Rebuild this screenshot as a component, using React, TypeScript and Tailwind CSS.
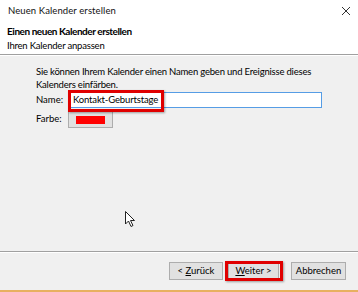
import React from "react";

export default function App() {
  return (
    <div
      className="relative w-[358px] h-[292px] overflow-hidden bg-[#f0f0f0] text-[9.5px] text-black"
      style={{ fontFamily: 'Lato, "Noto Sans", sans-serif' }}
    >
      {/* Title bar */}
      <div className="h-[21px] bg-white flex items-center justify-between pl-[8px] pr-[6px]">
        <span className="leading-none text-[#111] tracking-[0.1px]">Neuen Kalender erstellen</span>
        <svg width="10" height="10" viewBox="0 0 10 10" className="mr-[1px]">
          <path d="M1 1 L9 9 M9 1 L1 9" stroke="#333" strokeWidth="1" />
        </svg>
      </div>
      {/* Header */}
      <div className="h-[34px] bg-white pl-[7px] pt-[4px] flex flex-col gap-[1px] border-b border-[#a0a0a0]">
        <span className="font-bold leading-[13px] text-[10px] tracking-[-0.45px]">Einen neuen Kalender erstellen</span>
        <span className="leading-[13px] tracking-[-0.2px]">Ihren Kalender anpassen</span>
      </div>
      <div className="h-[1px] bg-white" />
      {/* Body */}
      <div className="h-[195px] pl-[36px] pt-[9px] flex flex-col">
        <p className="leading-[13px] whitespace-nowrap tracking-[-0.2px]">
          Sie können Ihrem Kalender einen Namen geben und Ereignisse dieses
          <br />
          Kalenders einfärben.
        </p>
        <div className="flex items-center mt-[1px] h-[16px]">
          <span className="w-[32px]">Name:</span>
          <div className="relative w-[254px] h-[16px] bg-white border border-[#569de5] flex items-center pl-[4px]">
            <span className="leading-none whitespace-nowrap tracking-[-0.15px]">Kontakt-Geburtstage</span>
            <div className="absolute left-[-1px] top-[-3px] w-[96px] h-[22px] border-[3px] border-[#e00000] shadow-[1px_1px_2px_rgba(0,0,0,0.35)]" />
          </div>
        </div>
        <div className="flex items-center mt-[3px] h-[17px]">
          <span className="w-[32px]">Farbe:</span>
          <div className="w-[45px] h-[17px] bg-[#e1e1e1] border border-[#adadad] flex items-center justify-center">
            <div className="w-[29px] h-[8px] bg-[#ff0000]" />
          </div>
        </div>
      </div>
      {/* Bottom separator */}
      <div className="h-[1px] bg-[#a0a0a0]" />
      <div className="h-[1px] bg-white" />
      {/* Buttons */}
      <div className="h-[36px] flex items-start justify-end pt-[9px] pr-[12px]">
        <button className="w-[54px] h-[18px] bg-[#e1e1e1] border border-[#adadad] leading-none whitespace-nowrap">
          &lt; <u>Z</u>urück
        </button>
        <div className="relative ml-[3px]">
          <button className="w-[51px] h-[18px] mx-[2px] bg-[#e1e1e1] border border-[#adadad] leading-none whitespace-nowrap">
            <u>W</u>eiter &gt;
          </button>
          <div className="absolute left-[-1px] top-[-1px] w-[58px] h-[20px] border-[3px] border-[#e00000] shadow-[1px_1px_2px_rgba(0,0,0,0.35)]" />
        </div>
        <button className="ml-[10px] w-[55px] h-[18px] bg-[#e1e1e1] border border-[#adadad] leading-none whitespace-nowrap">
          Abbrechen
        </button>
      </div>
      {/* Taskbar strip */}
      <div className="absolute left-0 bottom-0 w-full h-[2px] bg-[#e8b060]" />
      {/* Cursor */}
      <svg className="absolute left-[125px] top-[211px]" width="11" height="17" viewBox="0 0 11 17">
        <path d="M0.5 0.5 L0.5 13 L3.5 10 L6 15.5 L8 14.5 L5.5 9.5 L9.5 9.5 Z" fill="white" stroke="#222" strokeWidth="1" />
      </svg>
    </div>
  );
}
